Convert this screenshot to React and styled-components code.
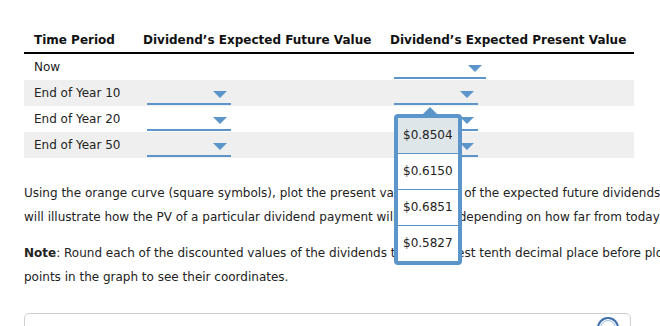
import React, { useState } from 'react';
import styled, { createGlobalStyle, css } from 'styled-components';

const blue = '#5b95c9';

const GlobalStyle = createGlobalStyle`
  html, body {
    margin: 0;
    padding: 0;
    background: #fff;
    overflow: hidden;
  }
  body {
    font-family: "DejaVu Sans", Verdana, sans-serif;
    font-size: 12px;
    color: #222;
  }
`;

const Page = styled.div`
  width: 760px;
  padding: 27px 0 0 24px;
  box-sizing: border-box;
  position: relative;
`;

const Table = styled.div`
  width: 610px;
  display: grid;
  grid-template-columns: 115px 247px 1fr;
`;

const HeadCell = styled.div`
  height: 25px;
  display: flex;
  align-items: center;
  padding-left: ${({ first }) => (first ? '10px' : '4px')};
  font-weight: bold;
  color: #111;
  border-bottom: 2px solid #000;
  white-space: nowrap;
`;

const Cell = styled.div`
  height: 26px;
  display: flex;
  align-items: center;
  padding-left: ${({ first }) => (first ? '10px' : '8px')};
  background: ${({ shaded }) => (shaded ? '#efefef' : '#fff')};
  position: relative;
`;

const Select = styled.div`
  position: relative;
  width: ${({ wide }) => (wide ? '92px' : '84px')};
  height: 21px;
  margin-top: 2px;
  border-bottom: 2px solid ${blue};
  box-sizing: border-box;
  cursor: pointer;
`;

const Arrow = styled.span`
  position: absolute;
  right: 4px;
  top: 7px;
  width: 0;
  height: 0;
  border-left: 7px solid transparent;
  border-right: 7px solid transparent;
  border-top: 7px solid ${blue};
`;

const Menu = styled.div`
  position: absolute;
  left: 0;
  top: 30px;
  width: 68px;
  border: 4px solid ${blue};
  border-radius: 4px;
  background: #fff;
  z-index: 5;
  box-sizing: border-box;

  &::before {
    content: '';
    position: absolute;
    top: -11px;
    left: 25px;
    border-left: 7px solid transparent;
    border-right: 7px solid transparent;
    border-bottom: 7px solid ${blue};
  }
`;

const Option = styled.div`
  height: 35px;
  display: flex;
  align-items: center;
  padding-left: 5px;
  color: #222;
  white-space: nowrap;
  ${({ active }) =>
    active &&
    css`
      background: #dfe6ea;
    `}
  & + & {
    border-top: 1px solid ${blue};
  }
`;

const Paragraph = styled.p`
  margin: ${({ top }) => top}px 0 0;
  line-height: 24px;
  white-space: nowrap;
`;

const Box = styled.div`
  margin-top: 24px;
  width: 607px;
  height: 40px;
  border: 1px solid #cfcfcf;
  border-radius: 5px;
  box-sizing: border-box;
  display: flex;
  justify-content: flex-end;
  padding: 2px 10px 0 0;
`;

const Dropdown = ({ wide, open, options }) => (
  <Select wide={wide}>
    <Arrow />
    {open && (
      <Menu>
        {options.map((o, i) => (
          <Option key={o} active={i === 0}>
            {o}
          </Option>
        ))}
      </Menu>
    )}
  </Select>
);

const rows = [
  { label: 'Now', future: false },
  { label: 'End of Year 10', future: true, open: true },
  { label: 'End of Year 20', future: true },
  { label: 'End of Year 50', future: true },
];

const App = () => {
  const [options] = useState(['$0.8504', '$0.6150', '$0.6851', '$0.5827']);

  return (
    <Page>
      <GlobalStyle />
      <Table>
        <HeadCell first>Time Period</HeadCell>
        <HeadCell>Dividend’s Expected Future Value</HeadCell>
        <HeadCell>Dividend’s Expected Present Value</HeadCell>
        {rows.map((r, i) => (
          <React.Fragment key={r.label}>
            <Cell first shaded={i % 2 === 1}>{r.label}</Cell>
            <Cell shaded={i % 2 === 1}>{r.future && <Dropdown />}</Cell>
            <Cell shaded={i % 2 === 1}>
              <Dropdown wide={i === 0} open={r.open} options={options} />
            </Cell>
          </React.Fragment>
        ))}
      </Table>
      <Paragraph top={23}>
        Using the orange curve (square symbols), plot the present value of each of the expected future dividends. This graph
        <br />
        will illustrate how the PV of a particular dividend payment will decrease depending on how far from today it is received.
      </Paragraph>
      <Paragraph top={12}>
        <b>Note</b>: Round each of the discounted values of the dividends to the nearest tenth decimal place before plotting. Click on the
        <br />
        points in the graph to see their coordinates.
      </Paragraph>
      <Box>
        <svg width="24" height="24" viewBox="0 0 24 24">
          <circle cx="12" cy="12" r="10" fill="#fff" stroke="#3c6fa8" strokeWidth="2" />
          <circle cx="12" cy="12" r="7.5" fill="none" stroke="#9bbbe0" strokeWidth="1" />
        </svg>
      </Box>
    </Page>
  );
};

export default App;
